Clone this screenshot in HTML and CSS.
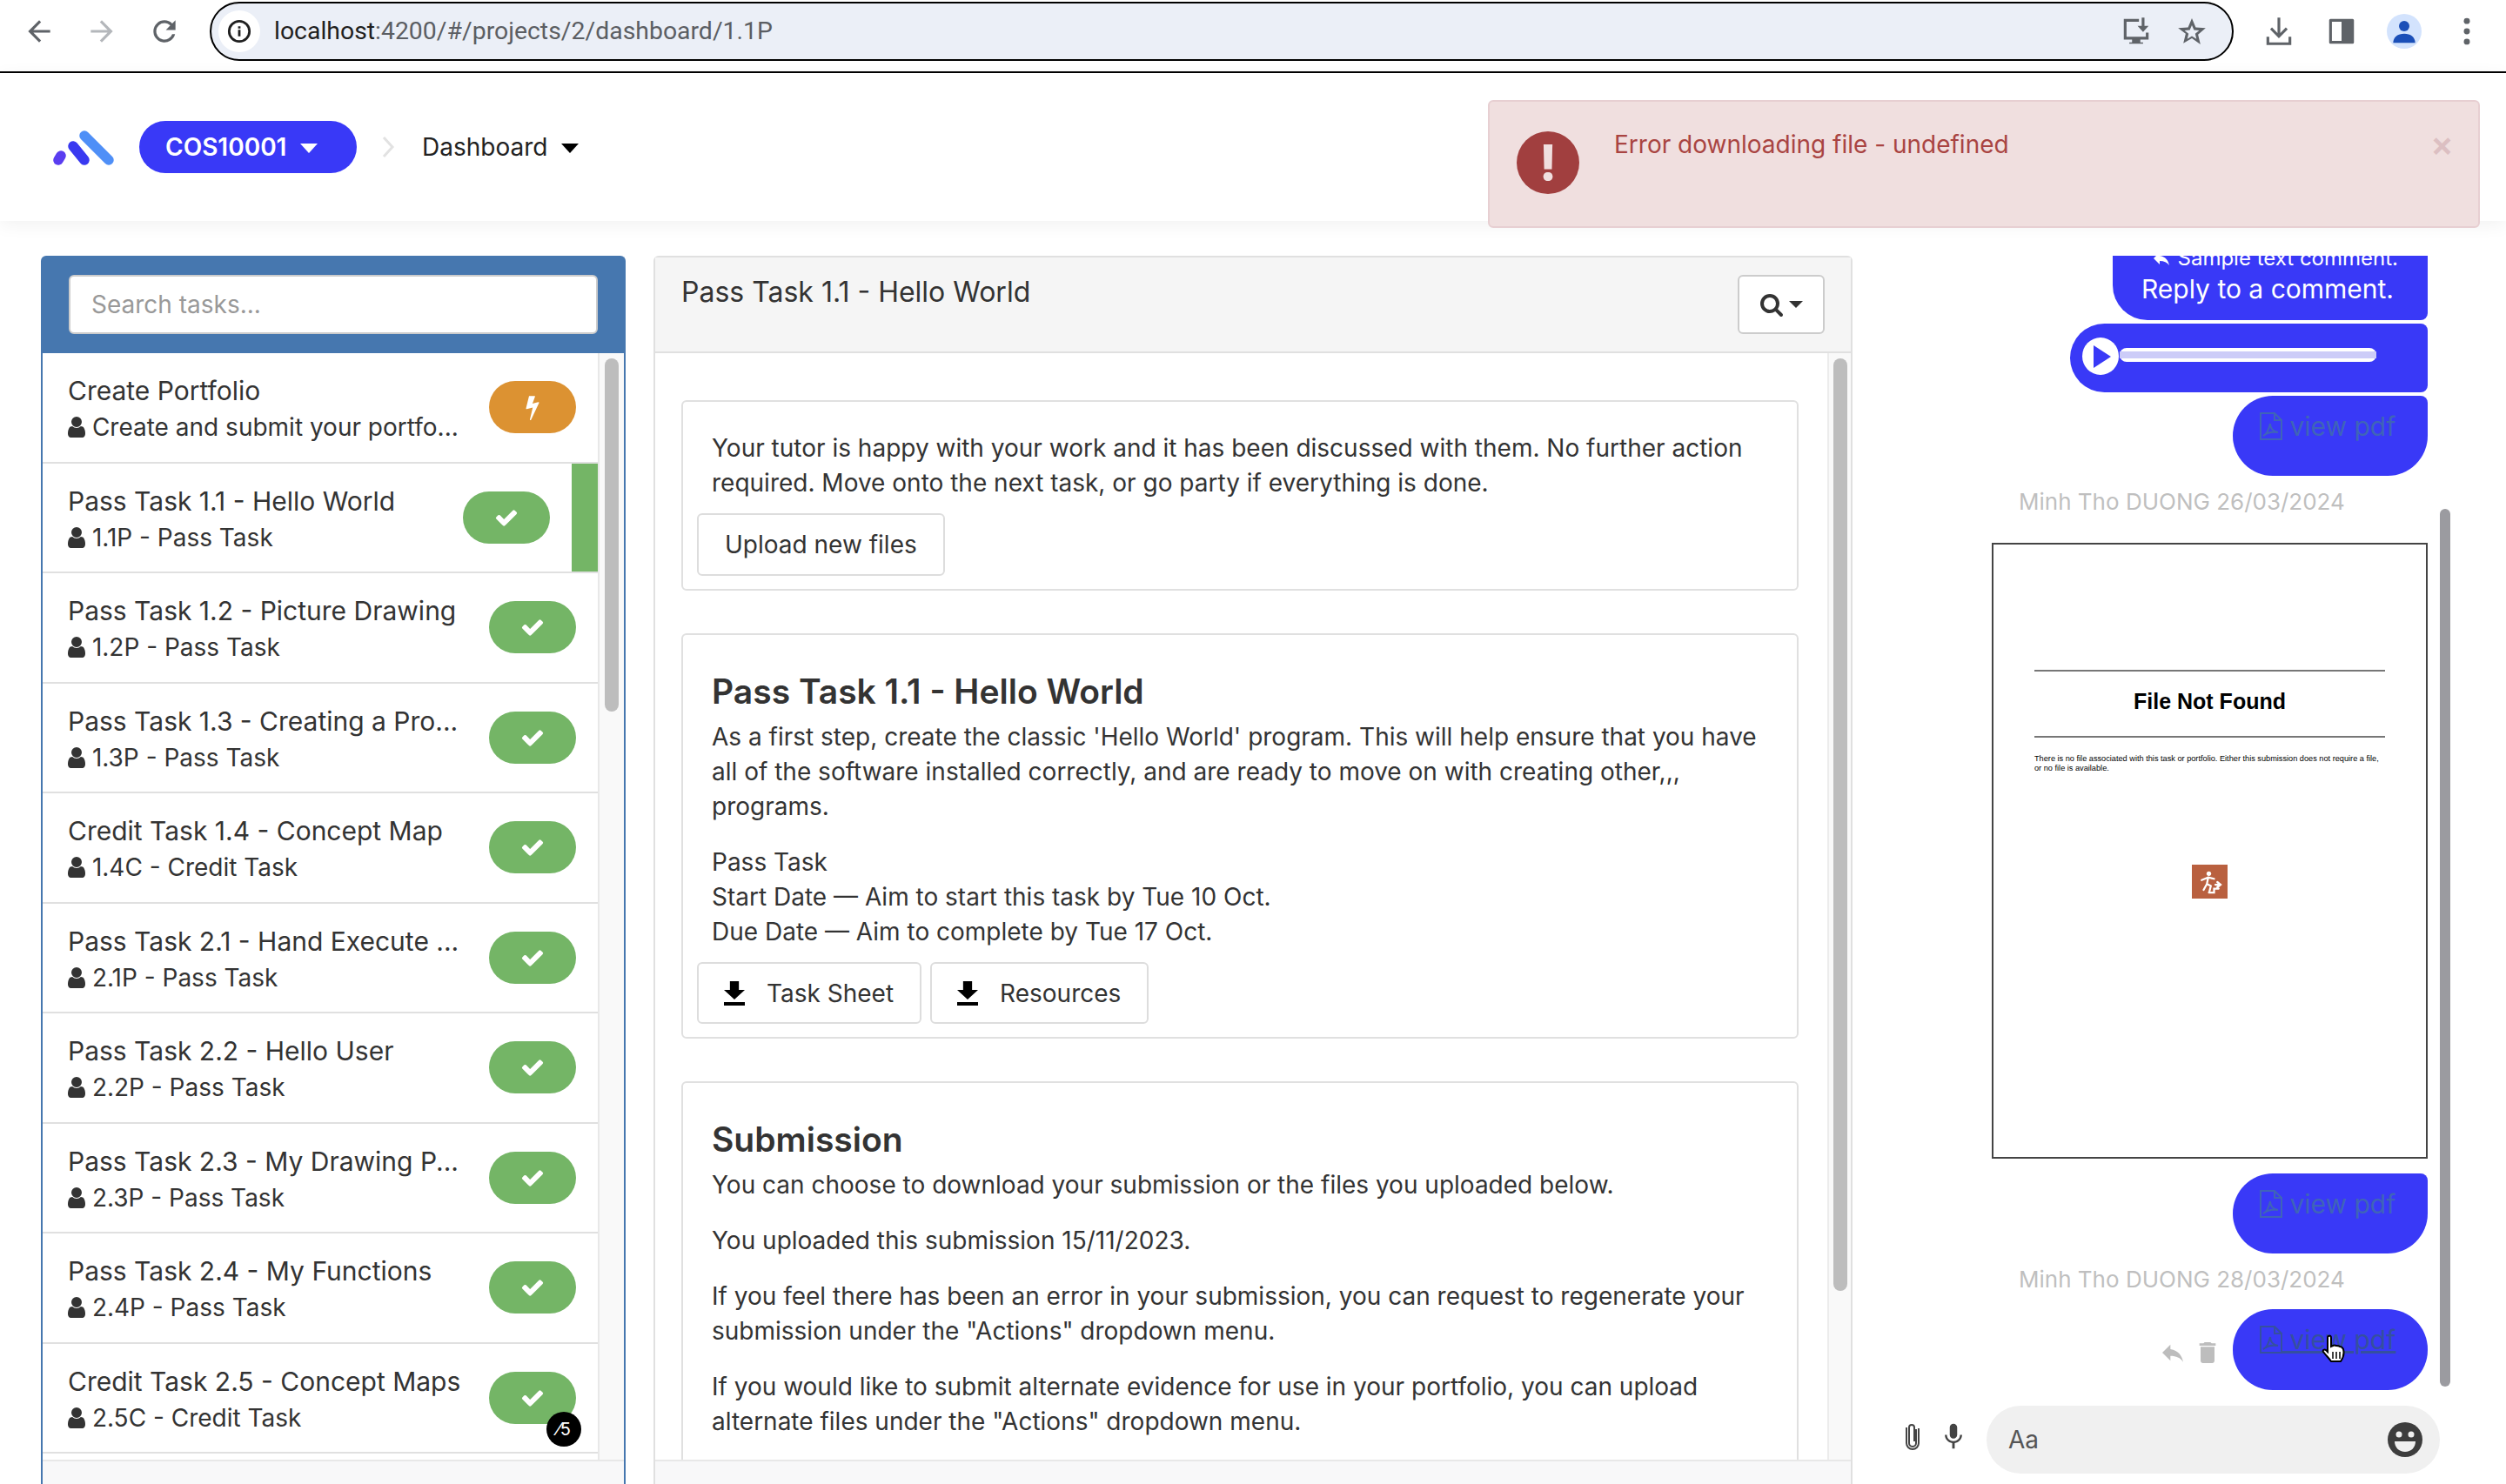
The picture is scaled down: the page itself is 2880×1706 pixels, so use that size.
FILE: index.html
```html
<!DOCTYPE html>
<html lang="en">
  <head>
    <meta charset="UTF-8" />
    <meta name="viewport" content="width=device-width, initial-scale=1.0" />
    <title>Dashboard</title>
    <link rel="stylesheet" href="styles.css">
  </head>
  <body>
    <svg class="defs" width="0" height="0">
      <symbol id="i-user" viewBox="256 128 1280 1536"><path d="M1536 1399q0 109-62.500 187t-150.500 78h-854q-88 0-150.500-78t-62.500-187q0-85 8.500-160.500t31.500-152 58.500-131 94-89 134.500-34.500q131 128 313 128t313-128q76 0 134.500 34.500t94 89 58.500 131 31.500 152 8.500 160.500zm-256-887q0 159-112.500 271.500t-271.500 112.500-271.500-112.500-112.500-271.500 112.500-271.500 271.500-112.500 271.500 112.500 112.500 271.500z"/></symbol>
      <symbol id="i-check" viewBox="0 0 1792 1792"><path d="M1671 566q0 40-28 68l-724 724-136 136q-28 28-68 28t-68-28l-136-136-362-362q-28-28-28-68t28-68l136-136q28-28 68-28t68 28l294 295 656-657q28-28 68-28t68 28l136 136q28 28 28 68z"/></symbol>
      <symbol id="i-bolt" viewBox="0 0 1792 1792"><path d="M1333 566q18 20 7 44l-540 1157q-13 25-42 25-4 0-14-2-17-5-25.500-19t-4.500-30l197-808-406 101q-4 1-12 1-18 0-31-11-18-15-13-39l201-825q4-14 16-23t28-9h328q19 0 32 12.500t13 29.500q0 8-5 18l-171 463 396-98q8-2 12-2 19 0 34 15z"/></symbol>
      <symbol id="i-download" viewBox="5 3 14 18" preserveAspectRatio="none"><path d="M5 21h14v-2.500H5V21zM19 9.500h-4V3H9v6.500H5l7 7 7-7z"/></symbol>
      <symbol id="i-pdf" viewBox="0 0 26 32"><path fill="none" stroke="currentColor" stroke-width="2" d="M1 1h16l8 8v22H1zM17 1v8h8M4 27c3-1 6-6 8-14 0 5 3 9 9 10-6-1-12 0-17 4z"/></symbol>
    </svg>

    <header class="browser-bar">
      <div class="slot">
        <svg class="chrome-icon" viewBox="0 0 24 24"><path d="M20 11H7.800l5.600-5.600L12 4l-8 8 8 8 1.400-1.400L7.800 13H20z"/></svg>
      </div>
      <div class="slot muted">
        <svg class="chrome-icon" viewBox="0 0 24 24"><path d="M4 11h12.200l-5.600-5.600L12 4l8 8-8 8-1.400-1.400 5.600-5.600H4z"/></svg>
      </div>
      <div class="slot">
        <svg class="chrome-icon" viewBox="0 0 24 24"><path d="M17.650 6.350A7.960 7.960 0 0 0 12 4a8 8 0 1 0 7.730 10h-2.080A6 6 0 1 1 12 6c1.660 0 3.140.69 4.220 1.780L13 11h7V4z"/></svg>
      </div>
      <div class="url-bar">
        <span class="site-info">
          <svg viewBox="0 0 24 24" width="28" height="28"><circle cx="12" cy="12" r="10" fill="none" stroke="#1f1f1f" stroke-width="2.400"/><path d="M10.800 10.500h2.400V17h-2.400zM10.800 7h2.400v2.300h-2.400z" fill="#1f1f1f"/></svg>
        </span>
        <span class="url-text"><span class="url-host">localhost</span>:4200/#/projects/2/dashboard/1.1P</span>
        <svg class="url-icon install" viewBox="0 0 24 24"><path d="M3 3h11v2H5v11h14v-3h2v5h-6v2h2v1H7v-1h2v-2H3zM16 2h2v6h3l-4 4.500L13 8h3z"/></svg>
        <svg class="url-icon star" viewBox="0 0 24 24"><path d="M12 2.500l2.800 6.600 7.200.6-5.500 4.700 1.700 7L12 17l-6.200 3.700 1.700-7L2 9.700l7.200-.6zm0 5l-1.500 3.500-3.800.3 2.900 2.500-.9 3.700 3.300-2 3.300 2-.9-3.700 2.900-2.500-3.800-.3z" fill-rule="evenodd"/></svg>
      </div>
      <div class="slot first-right">
        <svg class="chrome-icon" viewBox="0 0 24 24"><path d="M11 2h2v11.200l4-4 1.400 1.400-6.400 6.400-6.400-6.400L7 9.200l4 4zM3 16h2v4h14v-4h2v6H3z"/></svg>
      </div>
      <div class="slot">
        <svg class="chrome-icon" viewBox="0 0 24 24"><path d="M4 3h16a1 1 0 0 1 1 1v16a1 1 0 0 1-1 1H4a1 1 0 0 1-1-1V4a1 1 0 0 1 1-1zm1 2v14h7V5z" fill-rule="evenodd"/></svg>
      </div>
      <div class="slot">
        <span class="profile">
          <svg viewBox="0 0 24 24" width="32" height="32" fill="#1b4fb8"><circle cx="12" cy="7.500" r="4.500"/><path d="M2.500 22c0-5 4-8 9.500-8s9.500 3 9.500 8z"/></svg>
        </span>
      </div>
      <div class="slot">
        <svg class="chrome-icon" viewBox="0 0 24 24"><circle cx="12" cy="4.500" r="2.200"/><circle cx="12" cy="12" r="2.200"/><circle cx="12" cy="19.500" r="2.200"/></svg>
      </div>
    </header>

    <nav class="app-nav">
      <svg class="logo" viewBox="0 0 72 42" width="72" height="42" fill="none" stroke-linecap="round" stroke-width="11.500">
        <path d="M37 8l28 28" stroke="#4f8ff7"/>
        <path d="M24 20l13 16" stroke="#3939f0"/>
        <path d="M10 31l-3 5" stroke="#5a3df0"/>
      </svg>
      <button class="unit-btn">COS10001 <i class="caret white"></i></button>
      <svg class="crumb" viewBox="0 0 14 24" width="14" height="24" fill="none" stroke="#e2e2e2" stroke-width="3"><path d="M2 1l10 11L2 23"/></svg>
      <span class="crumb-link">Dashboard <i class="caret"></i></span>
    </nav>

    <div class="alert">
      <span class="alert-icon">!</span>
      <span class="alert-text">Error downloading file - undefined</span>
      <span class="alert-close">×</span>
    </div>

    <main class="content">
      <section class="tasks-panel">
        <div class="tasks-head">
          <input class="search-input" type="text" placeholder="Search tasks..." />
        </div>
        <div class="tasks-scroll">
          <ul class="task-list">
            <li class="task">
              <div class="task-text">
                <div class="task-title">Create Portfolio</div>
                <div class="task-sub"><svg class="user-icon"><use href="#i-user"/></svg> Create and submit your portfo...</div>
              </div>
              <span class="pill orange"><svg class="bolt-icon"><use href="#i-bolt"/></svg></span>
            </li>
            <li class="task selected">
              <div class="task-text">
                <div class="task-title">Pass Task 1.1 - Hello World</div>
                <div class="task-sub"><svg class="user-icon"><use href="#i-user"/></svg> 1.1P - Pass Task</div>
              </div>
              <span class="pill"><svg class="check-icon"><use href="#i-check"/></svg></span>
            </li>
            <li class="task">
              <div class="task-text">
                <div class="task-title">Pass Task 1.2 - Picture Drawing</div>
                <div class="task-sub"><svg class="user-icon"><use href="#i-user"/></svg> 1.2P - Pass Task</div>
              </div>
              <span class="pill"><svg class="check-icon"><use href="#i-check"/></svg></span>
            </li>
            <li class="task">
              <div class="task-text">
                <div class="task-title">Pass Task 1.3 - Creating a Pro...</div>
                <div class="task-sub"><svg class="user-icon"><use href="#i-user"/></svg> 1.3P - Pass Task</div>
              </div>
              <span class="pill"><svg class="check-icon"><use href="#i-check"/></svg></span>
            </li>
            <li class="task">
              <div class="task-text">
                <div class="task-title">Credit Task 1.4 - Concept Map</div>
                <div class="task-sub"><svg class="user-icon"><use href="#i-user"/></svg> 1.4C - Credit Task</div>
              </div>
              <span class="pill"><svg class="check-icon"><use href="#i-check"/></svg></span>
            </li>
            <li class="task">
              <div class="task-text">
                <div class="task-title">Pass Task 2.1 - Hand Execute ...</div>
                <div class="task-sub"><svg class="user-icon"><use href="#i-user"/></svg> 2.1P - Pass Task</div>
              </div>
              <span class="pill"><svg class="check-icon"><use href="#i-check"/></svg></span>
            </li>
            <li class="task">
              <div class="task-text">
                <div class="task-title">Pass Task 2.2 - Hello User</div>
                <div class="task-sub"><svg class="user-icon"><use href="#i-user"/></svg> 2.2P - Pass Task</div>
              </div>
              <span class="pill"><svg class="check-icon"><use href="#i-check"/></svg></span>
            </li>
            <li class="task">
              <div class="task-text">
                <div class="task-title">Pass Task 2.3 - My Drawing P...</div>
                <div class="task-sub"><svg class="user-icon"><use href="#i-user"/></svg> 2.3P - Pass Task</div>
              </div>
              <span class="pill"><svg class="check-icon"><use href="#i-check"/></svg></span>
            </li>
            <li class="task">
              <div class="task-text">
                <div class="task-title">Pass Task 2.4 - My Functions</div>
                <div class="task-sub"><svg class="user-icon"><use href="#i-user"/></svg> 2.4P - Pass Task</div>
              </div>
              <span class="pill"><svg class="check-icon"><use href="#i-check"/></svg></span>
            </li>
            <li class="task">
              <div class="task-text">
                <div class="task-title">Credit Task 2.5 - Concept Maps</div>
                <div class="task-sub"><svg class="user-icon"><use href="#i-user"/></svg> 2.5C - Credit Task</div>
              </div>
              <span class="pill">
                <svg class="check-icon"><use href="#i-check"/></svg>
                <span class="grade-badge">⁄5</span>
              </span>
            </li>
          </ul>
          <div class="track tasks-track"><div class="thumb"></div></div>
        </div>
        <div class="panel-foot"></div>
      </section>

      <section class="detail-panel">
        <div class="detail-head">
          <span class="detail-title">Pass Task 1.1 - Hello World</span>
          <button class="search-btn">
            <svg viewBox="0 0 1792 1792" width="28" height="28" fill="#333"><path d="M1216 832q0-185-131.500-316.500t-316.500-131.500-316.500 131.500-131.500 316.500 131.500 316.500 316.500 131.500 316.500-131.500 131.500-316.500zm512 832q0 52-38 90t-90 38q-54 0-90-38l-343-342q-179 124-399 124-143 0-273.500-55.500t-225-150-150-225-55.500-273.500 55.500-273.500 150-225 225-150 273.500-55.500 273.500 55.500 225 150 150 225 55.500 273.500q0 220-124 399l343 343q37 37 37 90z"/></svg>
            <i class="caret small"></i>
          </button>
        </div>
        <div class="detail-body">
          <div class="detail-cards">
            <div class="card">
              <p>Your tutor is happy with your work and it has been discussed with them. No further action required. Move onto the next task, or go party if everything is done.</p>
              <div class="card-actions">
                <button class="btn upload-btn">Upload new files</button>
              </div>
            </div>
            <div class="card">
              <h3>Pass Task 1.1 - Hello World</h3>
              <p>As a first step, create the classic 'Hello World' program. This will help ensure that you have all of the software installed correctly, and are ready to move on with creating other,,, programs.</p>
              <p class="spaced">Pass Task<br />Start Date — Aim to start this task by Tue 10 Oct.<br />Due Date — Aim to complete by Tue 17 Oct.</p>
              <div class="card-actions">
                <button class="btn"><svg class="dl-icon"><use href="#i-download"/></svg>Task Sheet</button>
                <button class="btn"><svg class="dl-icon"><use href="#i-download"/></svg>Resources</button>
              </div>
            </div>
            <div class="card card-long">
              <h3>Submission</h3>
              <p>You can choose to download your submission or the files you uploaded below.</p>
              <p class="spaced">You uploaded this submission 15/11/2023.</p>
              <p class="spaced">If you feel there has been an error in your submission, you can request to regenerate your submission under the "Actions" dropdown menu.</p>
              <p class="spaced">If you would like to submit alternate evidence for use in your portfolio, you can upload alternate files under the "Actions" dropdown menu.</p>
            </div>
          </div>
          <div class="track detail-track"><div class="thumb"></div></div>
        </div>
        <div class="panel-foot"></div>
      </section>

      <section class="chat">
        <div class="messages">
          <div class="bubble reply-bubble">
            <div class="quoted"><svg class="quote-icon" viewBox="0 0 24 24" fill="#fff"><path d="M10 9V5l-7 7 7 7v-4.100c5 0 8.500 1.600 11 5.100-1-5-4-10-11-11z"/></svg> Sample text comment.</div>
            <div>Reply to a comment.</div>
          </div>
          <div class="bubble audio-bubble">
            <span class="play"><i class="play-arrow"></i></span>
            <span class="audio-bar"><i></i></span>
          </div>
          <div class="bubble pdf-bubble"><a class="pdf-link"><svg class="pdf-icon"><use href="#i-pdf"/></svg>&nbsp;view pdf</a></div>

          <div class="author">Minh Tho DUONG 26/03/2024</div>

          <div class="pdf-page">
            <div class="pdf-heading">File Not Found</div>
            <p class="pdf-note">There is no file associated with this task or portfolio. Either this submission does not require a file,<br />or no file is available.</p>
            <span class="pdf-logo">
              <svg viewBox="0 0 40 40" width="30" height="30" fill="none" stroke="#fff" stroke-width="3"><circle cx="18" cy="7" r="3.500" fill="#fff" stroke="none"/><path d="M7 17l10-4 9 2M17 13l-2 10 6 3-2 8M15 23l-5 9M18 36h8v-6h7M28 24h6M31 20l5 4-5 4" stroke-linecap="round"/></svg>
            </span>
          </div>

          <div class="bubble pdf-bubble"><a class="pdf-link"><svg class="pdf-icon"><use href="#i-pdf"/></svg>&nbsp;view pdf</a></div>

          <div class="author">Minh Tho DUONG 28/03/2024</div>

          <div class="hover-row">
            <svg class="act-icon" viewBox="0 0 24 24"><path d="M10 9V5l-7 7 7 7v-4.100c5 0 8.500 1.600 11 5.100-1-5-4-10-11-11z"/></svg>
            <svg class="act-icon" viewBox="0 0 24 24"><path d="M6 19c0 1.100.9 2 2 2h8c1.100 0 2-.9 2-2V7H6zM19 4h-3.500l-1-1h-5l-1 1H5v2h14z"/></svg>
            <div class="bubble pdf-bubble"><a class="pdf-link hovered"><svg class="pdf-icon"><use href="#i-pdf"/></svg>&nbsp;view pdf</a></div>
          </div>

          <div class="chat-thumb"></div>
          <svg class="hand" viewBox="0 0 28 34" width="28" height="34"><path d="M8 2c2-1 3 0 3 2v10l2-1c2-1 3 0 4 0 2 0 3 0 4 1 2 0 3 1 4 3 1 4 0 10-3 14H11c-2-3-6-7-9-11-1-2 1-3 3-2l2 2V4c0-1 0-2 1-2z" fill="#fff" stroke="#000" stroke-width="2"/><path d="M13 20v8M17 20v8M21 20v8" stroke="#000" stroke-width="1.500"/></svg>
        </div>

        <div class="composer">
          <svg class="clip-icon" viewBox="0 0 18 32" width="18" height="32" fill="none" stroke="#444" stroke-width="2"><path d="M13 8v16a4 4 0 0 1-8 0V6a3 3 0 0 1 6 0v16"/><path d="M16 7v17a7 7 0 0 1-14 0V6"/></svg>
          <svg class="mic-icon" viewBox="0 0 24 24" width="34" height="34" fill="#444"><path d="M12 14c1.660 0 3-1.340 3-3V5c0-1.660-1.340-3-3-3S9 3.340 9 5v6c0 1.660 1.340 3 3 3zm5.300-3c0 3-2.540 5.100-5.300 5.100S6.700 14 6.700 11H5c0 3.410 2.720 6.230 6 6.720V22h2v-4.280c3.280-.48 6-3.300 6-6.720z"/></svg>
          <div class="composer-input">
            <span>Aa</span>
            <svg viewBox="0 0 40 40" width="40" height="40"><circle cx="20" cy="20" r="20" fill="#3d3d3d"/><circle cx="13" cy="14" r="3.500" fill="#f0f0f0"/><circle cx="27" cy="14" r="3.500" fill="#f0f0f0"/><path d="M8 22h24c0 7-5 12-12 12S8 29 8 22z" fill="#f0f0f0"/></svg>
          </div>
        </div>
      </section>
    </main>
  </body>
</html>
```

FILE: styles.css
```css
* {
  box-sizing: border-box;
}

html,
body {
  height: 1706px;
  margin: 0;
  overflow: hidden;
}

body {
  display: flex;
  flex-direction: column;
  position: relative;
  font-family: Inter, "Noto Sans", sans-serif;
  font-size: 28px;
  line-height: 40px;
  color: #333;
  background: #fff;
}

.defs {
  position: absolute;
}

button {
  font-family: inherit;
}

/* browser toolbar */
.browser-bar {
  display: flex;
  flex: none;
  height: 84px;
  padding: 2px 9px 0;
  border-bottom: 2px solid #000;
  background: #fff;
}

.slot {
  display: flex;
  flex: none;
  align-items: center;
  justify-content: center;
  width: 72px;
  height: 68px;
  fill: #5f6368;
}

.slot.muted {
  fill: #b4b7bb;
}

.slot.first-right {
  margin-left: 16px;
}

.chrome-icon {
  width: 38px;
  height: 38px;
}

.url-bar {
  display: flex;
  flex: 1;
  align-items: center;
  height: 68px;
  margin-left: 16px;
  padding-left: 8px;
  border: 2px solid #000;
  border-radius: 34px;
  background: #ebeff7;
}

.site-info {
  display: flex;
  align-items: center;
  justify-content: center;
  width: 48px;
  height: 48px;
  border-radius: 50%;
  background: #fff;
}

.url-text {
  flex: 1;
  margin-left: 16px;
  font-family: Roboto, sans-serif;
  font-size: 28.4px;
  color: #5b5e63;
}

.url-host {
  color: #1f1f1f;
}

.url-icon {
  width: 38px;
  height: 38px;
  fill: #5f6368;
}

.url-icon.install {
  margin-right: 26px;
}

.url-icon.star {
  margin-right: 27px;
}

.profile {
  display: flex;
  align-items: flex-end;
  justify-content: center;
  width: 40px;
  height: 40px;
  overflow: hidden;
  padding-bottom: 4px;
  border-radius: 50%;
  background: #d3e3fd;
}

/* app navbar */
.app-nav {
  display: flex;
  flex: none;
  align-items: center;
  height: 170px;
  padding-left: 60px;
  box-shadow: 0 4px 20px rgba(0, 0, 0, 0.06);
}

.unit-btn {
  width: 250px;
  height: 60px;
  margin-left: 28px;
  padding: 0 0 0 30px;
  border: 0;
  border-radius: 30px;
  font-size: 28px;
  font-weight: 600;
  text-align: left;
  color: #fff;
  background: #3939f7;
}

.crumb {
  margin-left: 29px;
}

.crumb-link {
  margin-left: 32px;
  color: #222;
}

.caret {
  display: inline-block;
  margin-left: 8px;
  vertical-align: 3px;
  border-top: 11px solid #000;
  border-right: 10px solid transparent;
  border-left: 10px solid transparent;
}

.caret.white {
  border-top-color: #fff;
}

.caret.small {
  margin-left: 6px;
  vertical-align: 5px;
  border-top: 8px solid #333;
  border-right: 8px solid transparent;
  border-left: 8px solid transparent;
}

/* error toast over the navbar */
.alert {
  display: flex;
  position: absolute;
  top: 115px;
  right: 30px;
  z-index: 2;
  width: 1140px;
  height: 147px;
  padding: 30px 28px 0 31px;
  border: 2px solid #e7cfd2;
  border-radius: 6px;
  color: #a94442;
  background: #f0dfdf;
}

.alert-icon {
  flex: none;
  width: 72px;
  height: 72px;
  margin-top: 4px;
  border-radius: 50%;
  font-size: 56px;
  font-weight: 800;
  line-height: 72px;
  text-align: center;
  color: #f0dfdf;
  background: #a13f3f;
}

.alert-text {
  flex: 1;
  margin-left: 40px;
  margin-top: -1px;
}

.alert-close {
  margin-top: -1px;
  font-size: 40px;
  font-weight: 600;
  color: #dcbfc2;
}

/* three columns */
.content {
  display: flex;
  flex: 1;
  min-height: 0;
  padding: 40px 0 0 47px;
}

.tasks-panel,
.detail-panel {
  display: flex;
  flex: none;
  flex-direction: column;
  border-radius: 6px 6px 0 0;
}

.tasks-panel {
  width: 672px;
  border: 2px solid #4677af;
  border-bottom: 0;
}

.tasks-head {
  flex: none;
  height: 110px;
  padding: 20px 30px;
  background: #4677af;
}

.search-input {
  display: block;
  width: 608px;
  height: 68px;
  padding: 0 24px;
  border: 2px solid #ccc;
  border-radius: 6px;
  font-family: inherit;
  font-size: 28px;
  background: #fff;
  outline: 0;
}

.search-input::placeholder {
  color: #999;
}

.tasks-scroll {
  display: flex;
  flex: 1;
  min-height: 0;
}

.task-list {
  flex: 1;
  margin: 0;
  padding: 0;
  overflow: hidden;
  border-right: 2px solid #e8e8e8;
  list-style: none;
}

.task {
  display: flex;
  align-items: center;
  justify-content: space-between;
  height: 126.5px;
  padding: 0 25px 0 29px;
  border-bottom: 2px solid #e0e0e0;
}

.task.selected {
  padding-right: 55px;
  background: linear-gradient(#74b566, #74b566) right top / 30px 100% no-repeat;
}

.task-text {
  padding-top: 4px;
}

.task-title {
  font-size: 30px;
  line-height: 42px;
  white-space: nowrap;
}

.task-sub {
  font-size: 28px;
  line-height: 42px;
  white-space: nowrap;
}

.user-icon {
  width: 20px;
  height: 24px;
  vertical-align: -2px;
  fill: #333;
}

.pill {
  display: flex;
  flex: none;
  position: relative;
  align-items: center;
  justify-content: center;
  width: 100px;
  height: 60px;
  border-radius: 30px;
  background: #74b566;
}

.pill.orange {
  background: #dc9232;
}

.check-icon {
  width: 28px;
  height: 28px;
  fill: #fff;
}

.bolt-icon {
  width: 30px;
  height: 30px;
  fill: #fff;
}

.grade-badge {
  position: absolute;
  top: 46px;
  right: -6px;
  width: 40px;
  height: 40px;
  border-radius: 50%;
  font-size: 20px;
  line-height: 40px;
  text-align: center;
  color: #fff;
  background: #000;
}

.track {
  flex: none;
  width: 28px;
  background: #f9f9f9;
}

.thumb {
  border-radius: 8px;
  background: #bdbdbd;
}

.tasks-track .thumb {
  width: 16px;
  height: 406px;
  margin: 6px 0 0 6px;
}

.detail-track {
  width: 27px;
  border-left: 2px solid #ececec;
}

.detail-track .thumb {
  width: 16px;
  height: 1072px;
  margin: 6px 0 0 5px;
}

.panel-foot {
  flex: none;
  height: 28px;
  border-top: 2px solid #e8e8e8;
  background: #f8f8f9;
}

/* task details */
.detail-panel {
  width: 1378px;
  margin-left: 32px;
  border: 2px solid #e0e0e0;
  border-bottom: 0;
}

.detail-head {
  display: flex;
  flex: none;
  justify-content: space-between;
  height: 110px;
  padding: 20px 30px 0 30px;
  border-bottom: 2px solid #e0e0e0;
  background: #f5f5f5;
}

.detail-title {
  font-size: 32px;
  line-height: 40px;
}

.search-btn {
  display: flex;
  align-items: center;
  justify-content: center;
  width: 100px;
  height: 68px;
  padding: 0;
  border: 2px solid #ccc;
  border-radius: 6px;
  background: #fff;
}

.detail-body {
  display: flex;
  flex: 1;
  min-height: 0;
}

.detail-cards {
  flex: 1;
  padding: 54px 33px 0 30px;
  overflow: hidden;
}

.card {
  margin-bottom: 49px;
  padding: 33px 16px 15px;
  border: 2px solid #e0e0e0;
  border-radius: 6px;
}

.card-long {
  padding-bottom: 120px;
}

.card h3 {
  margin: 0 15px 0 17px;
  font-size: 39px;
  font-weight: 600;
  line-height: 64px;
}

.card p {
  margin: 0 15px 0 17px;
}

.card p.spaced {
  margin-top: 24px;
}

.card-actions {
  display: flex;
  gap: 10px;
  margin-top: 15px;
}

.btn {
  display: flex;
  align-items: center;
  height: 71px;
  padding: 0 30px 0 29px;
  border: 2px solid #ddd;
  border-radius: 6px;
  font-size: 28px;
  color: #333;
  background: #fff;
}

.upload-btn {
  height: 72px;
  padding: 0 30px;
}

.dl-icon {
  width: 24px;
  height: 28px;
  margin-right: 25px;
  fill: #000;
}

/* comments */
.chat {
  display: flex;
  flex: 1;
  flex-direction: column;
  min-width: 0;
}

.messages {
  display: flex;
  flex: none;
  position: relative;
  flex-direction: column;
  justify-content: flex-end;
  align-items: flex-end;
  height: 1304px;
  padding-right: 90px;
  overflow: hidden;
}

.bubble {
  flex: none;
  margin-top: 4px;
  color: #fff;
  background: #3939f7;
}

.reply-bubble {
  padding: 0 39px 16px 33px;
  border-radius: 8px 8px 8px 40px;
  font-size: 30px;
  line-height: 40px;
}

.quoted {
  margin-right: -5px;
  font-size: 24px;
  line-height: 30px;
  text-align: right;
  white-space: nowrap;
}

.quote-icon {
  width: 24px;
  height: 24px;
  vertical-align: -4px;
}

.audio-bubble {
  display: flex;
  width: 411px;
  height: 79px;
  padding: 16px 0 0 14px;
  border-radius: 40px 8px 8px 40px;
}

.play {
  display: flex;
  flex: none;
  align-items: center;
  justify-content: center;
  width: 42px;
  height: 43px;
  padding-left: 4px;
  border-radius: 50%;
  background: #fff;
}

.play-arrow {
  border-top: 13px solid transparent;
  border-bottom: 13px solid transparent;
  border-left: 20px solid #3939f7;
}

.audio-bar {
  display: block;
  width: 295px;
  height: 16px;
  margin: 12px 0 0 1px;
  padding: 4px 0;
  border-radius: 8px;
  background: #fff;
}

.audio-bar i {
  display: block;
  height: 8px;
  background: #ccccf8;
}

.pdf-bubble {
  width: 224px;
  height: 92px;
  padding: 15px 0 0 31px;
  border-radius: 46px 8px 46px 46px;
}

.pdf-link {
  display: inline-block;
  font-size: 30px;
  color: #3f64b8;
}

.pdf-link.hovered {
  text-decoration: underline;
  color: #35509f;
}

.pdf-icon {
  width: 26px;
  height: 32px;
  vertical-align: -5px;
}

.author {
  flex: none;
  align-self: flex-start;
  height: 60px;
  padding-left: 191px;
  font-size: 26px;
  line-height: 60px;
  color: #bfbfbf;
}

.pdf-page {
  display: flex;
  flex: none;
  flex-direction: column;
  align-items: center;
  width: 501px;
  height: 708px;
  margin: 17px 0 13px;
  padding: 144px 47px 0;
  border: 2px solid #444;
  font-family: "Liberation Sans", Arial, sans-serif;
  color: #000;
  background: #fff;
}

.pdf-heading {
  width: 100%;
  height: 78px;
  border-top: 2px solid #777;
  border-bottom: 2px solid #777;
  font-size: 25px;
  font-weight: 700;
  line-height: 68px;
  text-align: center;
}

.pdf-note {
  width: 100%;
  margin: 19px 0 0;
  font-size: 9.2px;
  line-height: 10.500px;
  white-space: nowrap;
}

.pdf-logo {
  display: flex;
  align-items: center;
  justify-content: center;
  width: 41px;
  height: 39px;
  margin-top: 106px;
  background: #b9603f;
}

.hover-row {
  display: flex;
  flex: none;
  align-items: center;
  gap: 8px;
}

.hover-row .pdf-bubble {
  height: 93px;
  margin-top: 4px;
  margin-left: 5px;
  border-radius: 46px;
}

.act-icon {
  width: 32px;
  height: 32px;
  margin-top: 10px;
  fill: #bdbdbd;
}

.chat-thumb {
  position: absolute;
  top: 291px;
  right: 64px;
  width: 12px;
  height: 1009px;
  border-radius: 6px;
  background: #9b9ba0;
}

.hand {
  position: absolute;
  right: 184px;
  bottom: 30px;
}

.composer {
  display: flex;
  flex: none;
  align-items: center;
  height: 78px;
  margin: 18px 0 0 60px;
}

.clip-icon {
  flex: none;
  margin-top: -8px;
}

.mic-icon {
  flex: none;
  margin: -8px 0 0 21px;
}

.composer-input {
  display: flex;
  align-items: center;
  justify-content: space-between;
  width: 521px;
  height: 78px;
  margin-left: 21px;
  padding: 0 20px 0 25px;
  border-radius: 39px;
  color: #555;
  background: #f0f0f0;
}
```
